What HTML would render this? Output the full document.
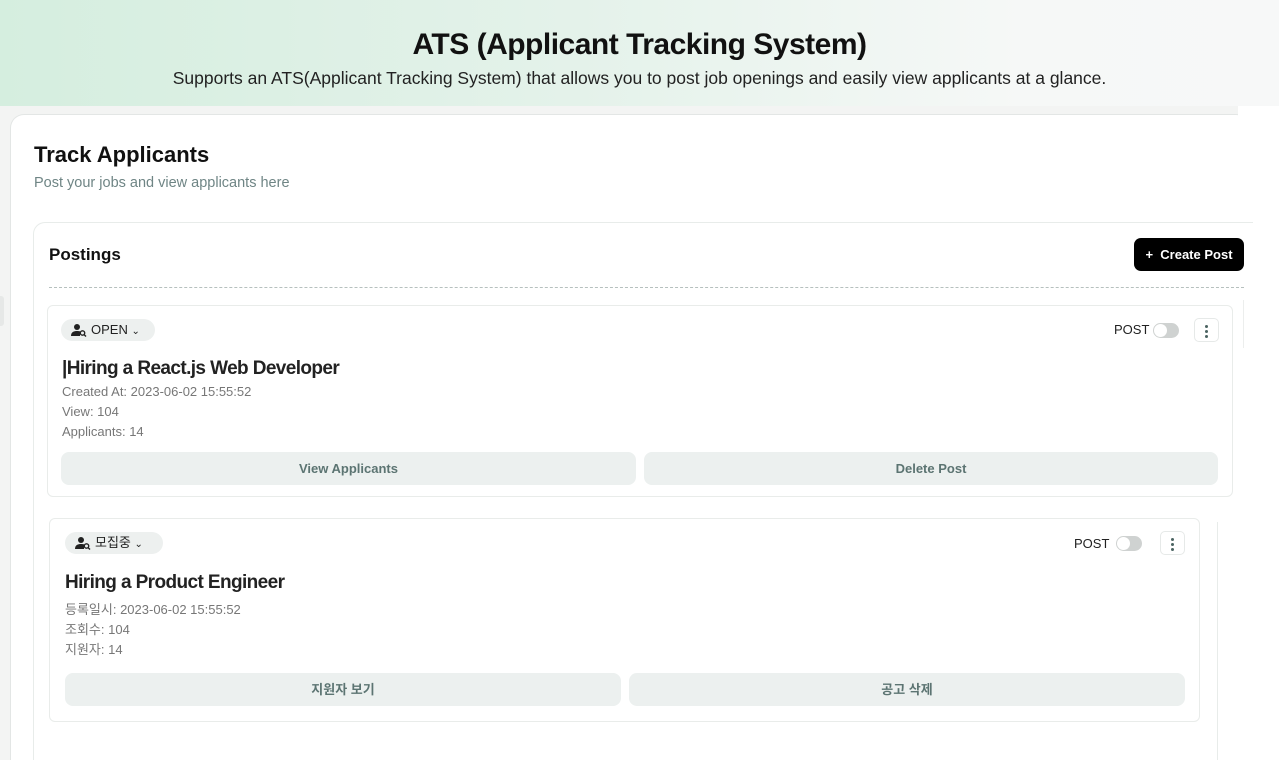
<!DOCTYPE html>
<html><head><meta charset="utf-8"><style>
*{box-sizing:border-box;margin:0;padding:0}
html,body{width:1279px;height:760px;overflow:hidden}
body{background:#fff;font-family:"Liberation Sans","Noto Sans CJK KR",sans-serif;position:relative}
.hdr{position:absolute;left:0;top:0;width:1279px;height:106px;background:linear-gradient(90deg,#d5eedf 0%,#e4f2ea 45%,#f6f8f7 80%,#f7f8f8 100%)}
.hdr h1{position:absolute;top:28px;left:0;width:1279px;text-align:center;font-size:30px;font-weight:bold;color:#111;letter-spacing:-0.5px}
.hdr p{position:absolute;top:68px;left:0;width:1279px;text-align:center;font-size:17.5px;color:#222}
.shot{position:absolute;left:0;top:106px;width:1238px;height:654px;background:#f3f4f3}
.main{position:absolute;left:10px;top:114px;width:1240px;height:646px;background:#fff;border:1px solid #e3e6e5;border-bottom:none;border-radius:14px 14px 0 0}
.abs{position:absolute}
.tt{left:34px;top:142px;font-size:22px;font-weight:bold;color:#111}
.st{left:34px;top:175px;font-size:14.5px;color:#6f8585}
.pc{left:33px;top:222px;width:1185px;height:538px;border:1px solid #e8ecea;border-bottom:none;border-radius:12px 12px 0 0;background:#fff}
.ph{left:49px;top:245px;font-size:17px;font-weight:bold;color:#111}
.btn{left:1134px;top:238px;width:110px;height:33px;background:#000;color:#fff;border-radius:7px;font-size:13px;font-weight:bold;line-height:33px;text-align:center}
.dash{left:49px;top:287px;width:1195px;border-top:1px dashed #b6c0be}
.card{border:1px solid #e9ecea;border-radius:6px;background:#fff}
.pill{height:22px;border-radius:11px;background:#edf0ef;font-size:13px;color:#222;line-height:22px;padding-left:30px}
.ti{font-size:19px;font-weight:bold;color:#222;letter-spacing:-0.6px}
.meta{font-size:13px;color:#777;line-height:20px}
.gb{height:33px;border-radius:8px;background:#ecf0ef;color:#5c7472;font-size:13px;font-weight:bold;line-height:33px;text-align:center}
.post{font-size:13px;color:#222}
.tog{width:26px;height:15px;border-radius:8px;background:#cfd2d1;position:absolute}
.tog:after{content:"";position:absolute;left:1px;top:1px;width:13px;height:13px;border-radius:50%;background:#fff}
.km{width:25px;height:24px;border:1px solid #e6e9e8;border-radius:5px;background:#fff}
.km i{position:absolute;left:10px;width:3px;height:3px;border-radius:50%;background:#4b6462}
</style></head><body>
<div class="hdr"><h1>ATS (Applicant Tracking System)</h1><p>Supports an ATS(Applicant Tracking System) that allows you to post job openings and easily view applicants at a glance.</p></div>
<div class="shot"></div>
<div class="abs" style="left:0;top:296px;width:4px;height:30px;background:#e6e8e7;border-radius:0 3px 3px 0"></div>
<div class="main abs"></div>
<div class="abs" style="left:1238px;top:106px;width:41px;height:654px;background:#fff"></div>
<div class="abs tt">Track Applicants</div>
<div class="abs st">Post your jobs and view applicants here</div>
<div class="abs pc"></div>
<div class="abs" style="left:1205px;top:222px;width:74px;height:300px;background:#fff"></div>
<div class="abs" style="left:1200px;top:222px;width:53px;border-top:1px solid #e8ecea"></div>
<div class="abs" style="left:1243px;top:300px;width:1px;height:48px;background:#eceeed"></div>
<div class="abs ph">Postings</div>
<div class="abs btn">+&nbsp; Create Post</div>
<div class="abs dash"></div>

<div class="abs card" style="left:47px;top:305px;width:1186px;height:192px"></div>
<div class="abs pill" style="left:61px;top:319px;width:94px">OPEN <span style="font-size:10px">&#8964;</span></div>
<svg class="abs" style="left:71px;top:323px" width="16" height="14" viewBox="0 0 16 14"><circle cx="6" cy="4" r="3" fill="#222"/><path d="M0 13c0-4 3-5 6-5s3 .5 3 .5v4.5z" fill="#222"/><circle cx="11.5" cy="10" r="2.2" fill="none" stroke="#222" stroke-width="1.4"/><path d="M13 11.5l2 2" stroke="#222" stroke-width="1.4"/></svg>
<div class="abs ti" style="left:62px;top:358px">|Hiring a React.js Web Developer</div>
<div class="abs meta" style="left:62px;top:382px">Created At: 2023-06-02 15:55:52<br>View: 104<br>Applicants: 14</div>
<div class="abs gb" style="left:61px;top:452px;width:575px">View Applicants</div>
<div class="abs gb" style="left:644px;top:452px;width:574px">Delete Post</div>
<div class="abs post" style="left:1114px;top:322px">POST</div>
<div class="tog" style="left:1153px;top:323px"></div>
<div class="abs km" style="left:1194px;top:318px"><i style="top:6px"></i><i style="top:11px"></i><i style="top:16px"></i></div>

<div class="abs card" style="left:49px;top:518px;width:1151px;height:204px"></div>
<div class="abs pill" style="left:65px;top:532px;width:98px">모집중 <span style="font-size:10px">&#8964;</span></div>
<svg class="abs" style="left:75px;top:536px" width="16" height="14" viewBox="0 0 16 14"><circle cx="6" cy="4" r="3" fill="#222"/><path d="M0 13c0-4 3-5 6-5s3 .5 3 .5v4.5z" fill="#222"/><circle cx="11.5" cy="10" r="2.2" fill="none" stroke="#222" stroke-width="1.4"/><path d="M13 11.5l2 2" stroke="#222" stroke-width="1.4"/></svg>
<div class="abs ti" style="left:65px;top:572px">Hiring a Product Engineer</div>
<div class="abs meta" style="left:65px;top:600px">등록일시: 2023-06-02 15:55:52<br>조회수: 104<br>지원자: 14</div>
<div class="abs gb" style="left:65px;top:673px;width:556px">지원자 보기</div>
<div class="abs gb" style="left:629px;top:673px;width:556px">공고 삭제</div>
<div class="abs post" style="left:1074px;top:536px">POST</div>
<div class="tog" style="left:1116px;top:536px"></div>
<div class="abs km" style="left:1160px;top:531px"><i style="top:6px"></i><i style="top:11px"></i><i style="top:16px"></i></div>
</body></html>
